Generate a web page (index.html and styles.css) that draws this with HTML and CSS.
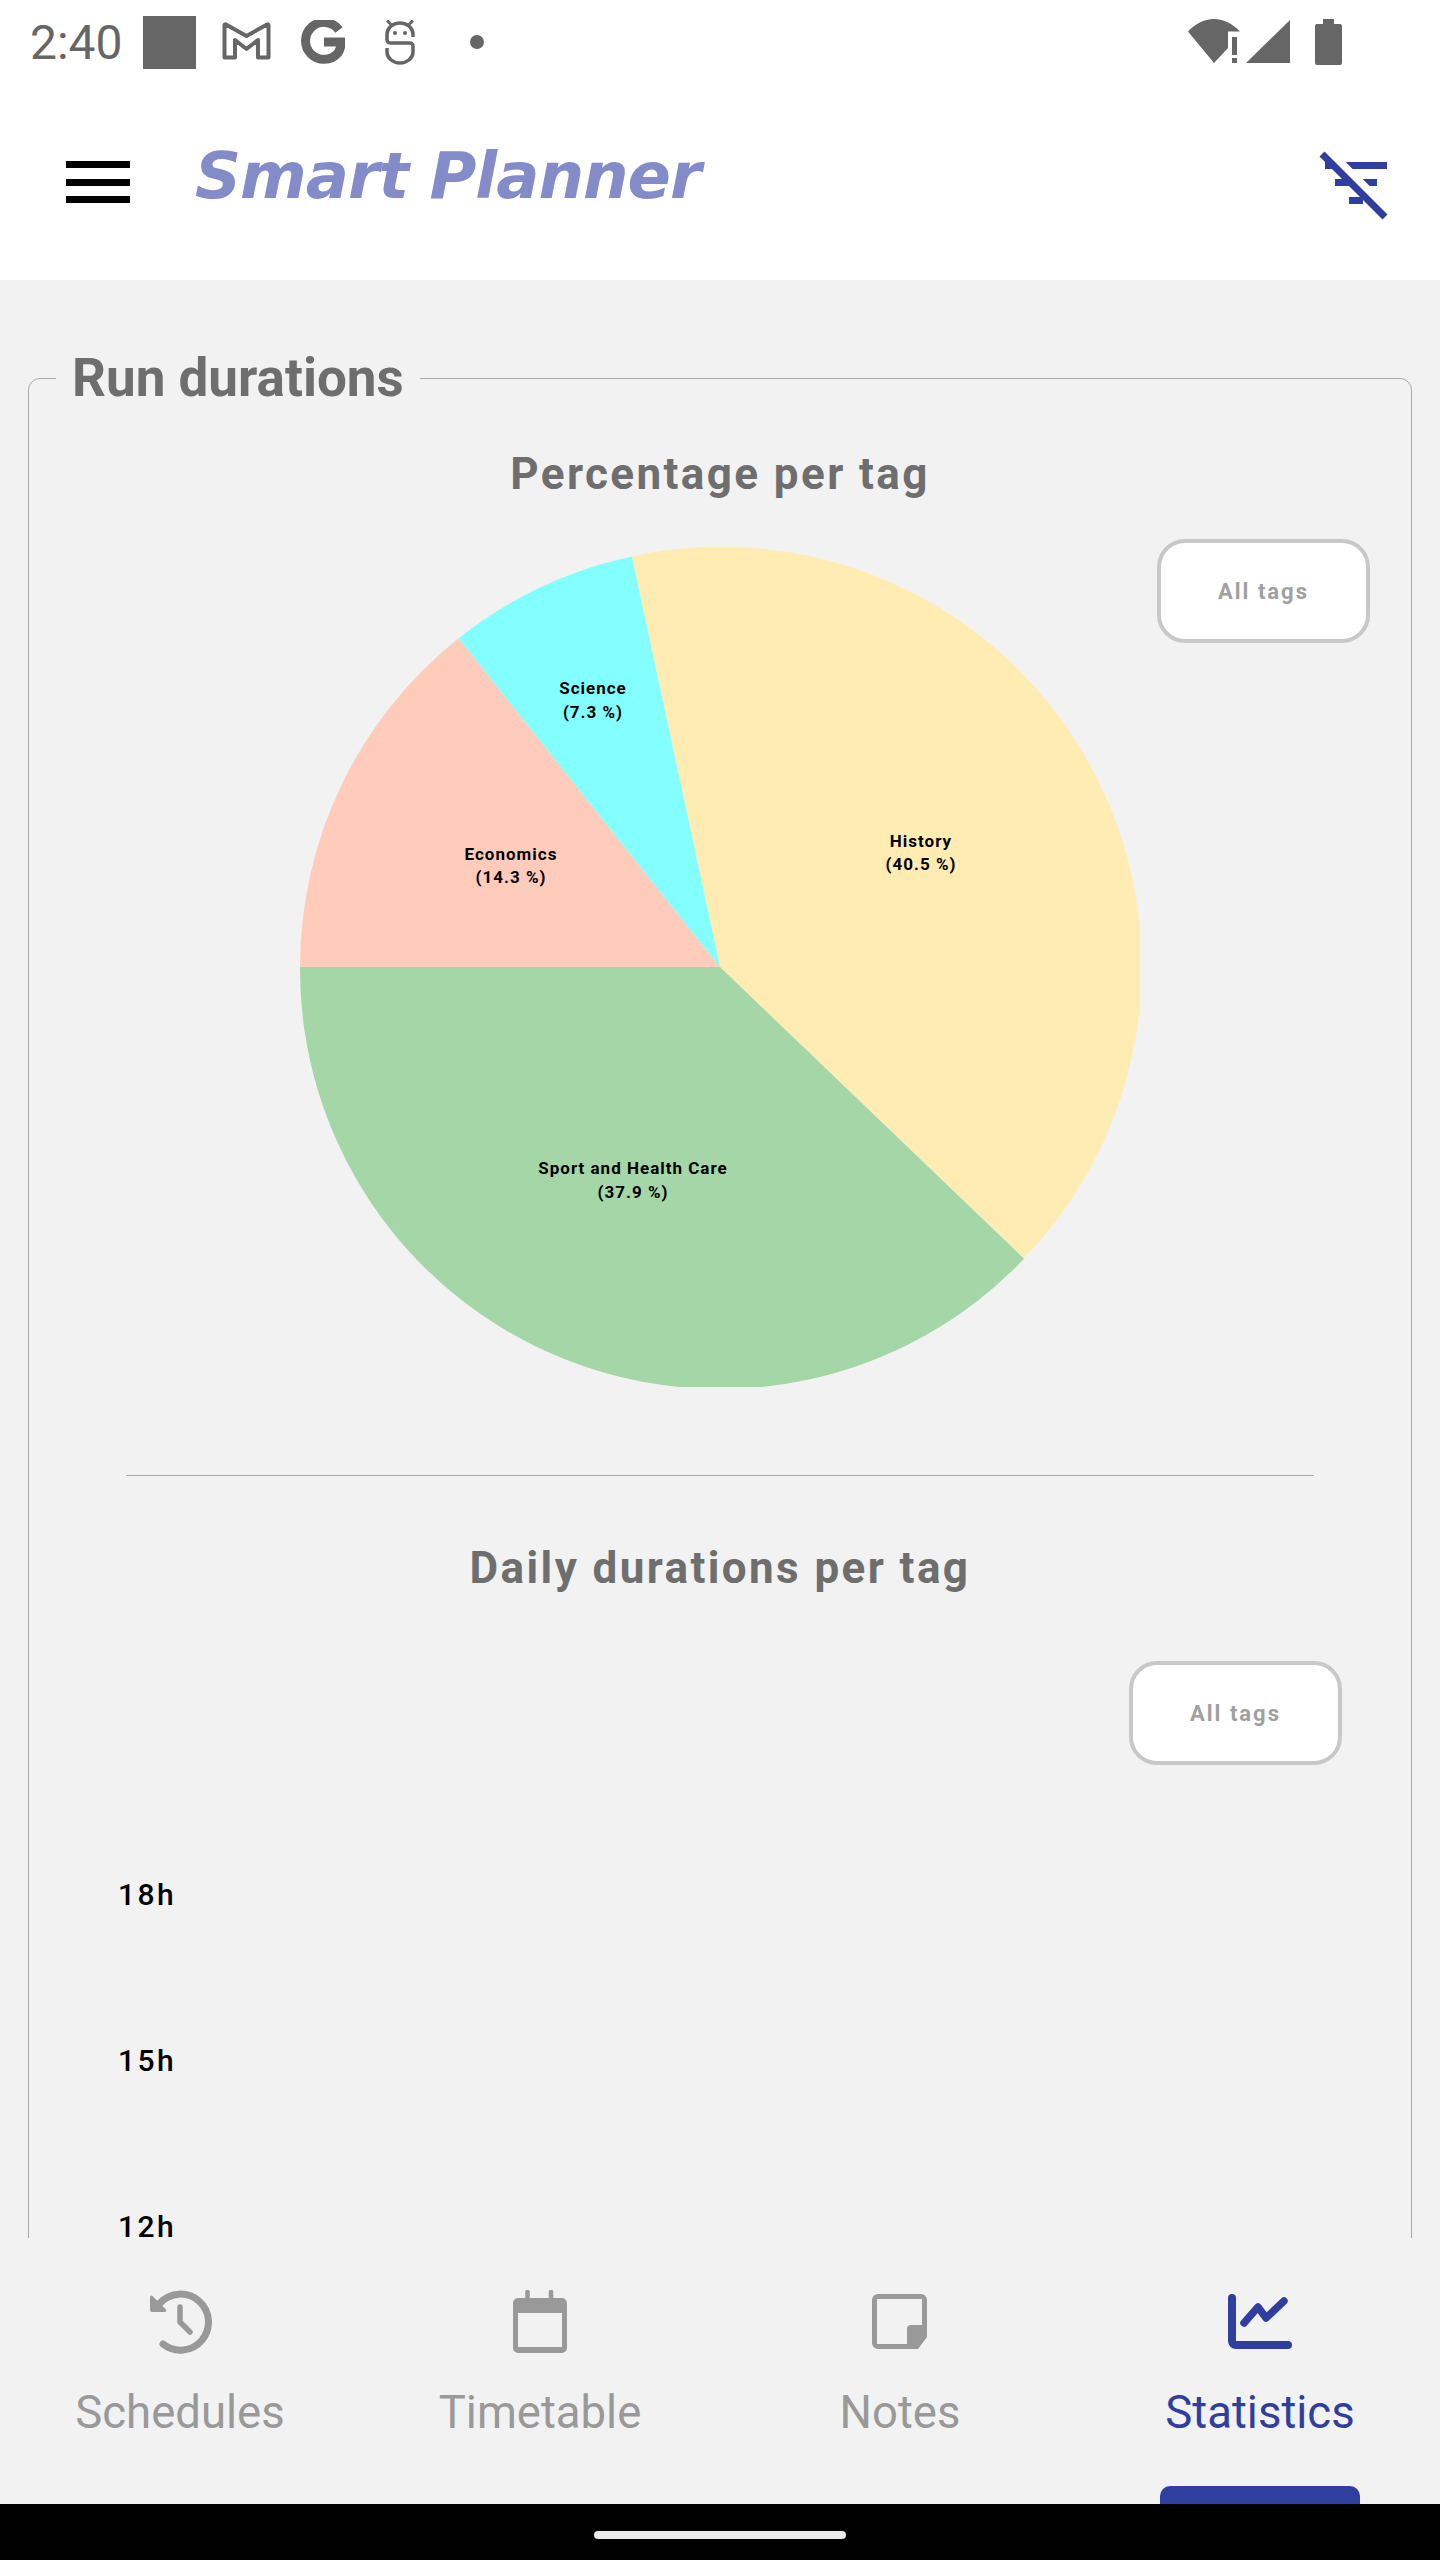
FILE: index.html
```html
<!DOCTYPE html>
<html lang="en">
<head>
  <meta charset="UTF-8">
  <meta name="viewport" content="width=device-width, initial-scale=1.0">
  <title>Smart Planner</title>
  <link rel="stylesheet" href="styles.css">
</head>
<body>
  <div class="status-bar">
    <div class="status-left">
      <span class="time">2:40</span>
      <span class="status-square"></span>
      <svg class="ico-m" viewBox="0 0 49 38"><path d="M2.500 3.500a1 1 0 0 1 1.500-1L24.500 14 45 2.500a1 1 0 0 1 1.500 1V35.500H36V18L24.500 27 13 18V35.500H2.500z" fill="none" stroke="#666" stroke-width="4" stroke-linejoin="round"/></svg>
      <svg class="ico-g" viewBox="0 0 44 45"><path d="M38 10A18.500 18.500 0 1 0 37 33 19 19 0 0 0 40 22H23" fill="none" stroke="#666" stroke-width="9"/></svg>
      <svg class="ico-bug" viewBox="0 0 32 45"><path d="M29 17V14A13 11 0 0 0 3 14V20a3 3 0 0 0 3 3H26a3 3 0 0 1 3 3V32A13 11 0 0 1 3 32V28" fill="none" stroke="#666" stroke-width="3.500"/><circle cx="11" cy="13" r="2" fill="#666"/><circle cx="21" cy="13" r="2" fill="#666"/><path d="M3 0.500l4 4M29 0.500l-4 4" stroke="#666" stroke-width="3"/></svg>
      <span class="status-dot"></span>
    </div>
    <div class="status-right">
      <svg class="ico-wifi" viewBox="0 0 52 44"><path d="M0 12.500C7 5 16 0 26 0s19 5 26 12.500h-12V29L26 44z" fill="#666"/><path d="M44 18h5v18h-5zM44 39h5v5h-5z" fill="#666"/></svg>
      <svg class="ico-signal" viewBox="0 0 44 43"><path d="M44 0v43H0z" fill="#666"/></svg>
      <svg class="ico-battery" viewBox="0 0 27 46"><path d="M8 0h11v5h6a2 2 0 0 1 2 2v37a2 2 0 0 1-2 2H2a2 2 0 0 1-2-2V7a2 2 0 0 1 2-2h6z" fill="#666"/></svg>
    </div>
  </div>

  <header class="app-bar">
    <div class="menu-icon"><span></span><span></span><span></span></div>
    <h1 class="app-title">Smart Planner</h1>
    <svg class="filter-off" viewBox="0 0 69 69"><path d="M6 11h62v7H6zM16 28h42v7H16zM30 46h14v7H30z" fill="#303f9f"/><path d="M8 -2l63 63" stroke="#fff" stroke-width="8"/><path d="M3 3l63 63" stroke="#303f9f" stroke-width="7"/></svg>
  </header>

  <main class="content">
    <fieldset class="panel">
      <legend>Run durations</legend>

      <h2 class="chart-title">Percentage per tag</h2>
      <div class="pie-chart">
        <button class="tag-button pie-button">All tags</button>
        <svg class="pie" viewBox="0 0 840 840">
          <path d="M420 420L331.800 9.400A420 420 0 0 1 724.100 711.100z" fill="#ffecb3"/>
          <path d="M420 420L724.100 711.700A420 420 0 0 1 0 420z" fill="#a5d6a7"/>
          <path d="M420 420H0A420 420 0 0 1 158.600 91.300z" fill="#ffccbc"/>
          <path d="M420 420L158.600 91.300A420 420 0 0 1 331.800 9.400z" fill="#84ffff"/>
          <g class="pie-label">
            <text x="621" y="300">History</text><text x="621" y="323">(40.5 %)</text>
            <text x="333" y="627">Sport and Health Care</text><text x="333" y="651">(37.9 %)</text>
            <text x="211" y="313">Economics</text><text x="211" y="336">(14.3 %)</text>
            <text x="293" y="147">Science</text><text x="293" y="171">(7.3 %)</text>
          </g>
        </svg>
      </div>

      <hr class="divider">

      <h2 class="chart-title chart-title-daily">Daily durations per tag</h2>
      <div class="button-row">
        <button class="tag-button">All tags</button>
      </div>
      <div class="y-axis">
        <span>18h</span>
        <span>15h</span>
        <span>12h</span>
      </div>
    </fieldset>
  </main>

  <nav class="bottom-nav">
    <div class="nav-item">
      <svg class="nav-icon" viewBox="0 0 64 64"><path d="M12 13A28 28 0 1 1 15 54" fill="none" stroke="#999" stroke-width="7" stroke-linecap="round"/><path d="M2 7a1.500 1.500 0 0 1 2.500-1L18 19.500a1.500 1.500 0 0 1-1 2.500H4a2 2 0 0 1-2-2z" fill="#999"/><path d="M32 17V32L42 42" fill="none" stroke="#999" stroke-width="5.500" stroke-linecap="round" stroke-linejoin="round"/></svg>
      <span>Schedules</span>
    </div>
    <div class="nav-item">
      <svg class="nav-icon" viewBox="0 0 64 64"><path d="M10 8h44a5 5 0 0 1 5 5v45a5 5 0 0 1-5 5H10a5 5 0 0 1-5-5V13a5 5 0 0 1 5-5zm0 15v34h44V23z" fill="#999" fill-rule="evenodd"/><path d="M19.500 2v8M43 2v8" stroke="#999" stroke-width="4.500" stroke-linecap="round"/></svg>
      <span>Timetable</span>
    </div>
    <div class="nav-item">
      <svg class="nav-icon" viewBox="0 0 64 64"><path d="M10 4h43a6 6 0 0 1 6 6v37L50 59H10a6 6 0 0 1-6-6V10a6 6 0 0 1 6-6zM9 9v45h30V39a4 4 0 0 1 4-4h11V9z" fill="#999" fill-rule="evenodd"/></svg>
      <span>Notes</span>
    </div>
    <div class="nav-item active">
      <svg class="nav-icon" viewBox="0 0 64 64"><path d="M4 8V51a4 4 0 0 0 4 4H60" fill="none" stroke="#303f9f" stroke-width="8" stroke-linecap="round" stroke-linejoin="round"/><path d="M16 33L30 17L38 28L56 11" fill="none" stroke="#303f9f" stroke-width="7.500" stroke-linecap="round" stroke-linejoin="round"/></svg>
      <span>Statistics</span>
      <div class="nav-indicator"></div>
    </div>
  </nav>

  <div class="system-bar"><div class="home-pill"></div></div>
</body>
</html>
```

FILE: styles.css
```css
* {
  box-sizing: border-box;
}

body {
  margin: 0;
  height: 2560px;
  display: flex;
  flex-direction: column;
  background: #f2f2f2;
  font-family: Roboto, sans-serif;
  overflow: hidden;
}

/* status bar */
.status-bar {
  height: 90px;
  flex: none;
  background: #fff;
  display: flex;
  justify-content: space-between;
  padding: 16px 98px 0 30px;
}

.status-left {
  display: flex;
  align-items: flex-start;
}

.time {
  font-size: 48px;
  line-height: 54px;
  width: 113px;
  color: #666;
}

.status-square {
  width: 53px;
  height: 53px;
  background: #666;
  margin-right: 26px;
}

.ico-m {
  width: 49px;
  height: 38px;
  margin: 6px 30px 0 0;
}

.ico-g {
  width: 44px;
  height: 45px;
  margin: 4px 39px 0 0;
}

.ico-bug {
  width: 32px;
  height: 45px;
  margin: 4px 54px 0 0;
}

.status-dot {
  width: 14px;
  height: 14px;
  margin-top: 19px;
  border-radius: 50%;
  background: #666;
}

.status-right {
  display: flex;
  align-items: flex-start;
}

.ico-wifi {
  width: 52px;
  height: 44px;
  margin: 3px 6px 0 0;
}

.ico-signal {
  width: 44px;
  height: 43px;
  margin: 4px 25px 0 0;
}

.ico-battery {
  width: 27px;
  height: 46px;
  margin-top: 3px;
}

/* app bar */
.app-bar {
  height: 190px;
  flex: none;
  background: #fff;
  display: flex;
  align-items: center;
  padding: 0 52px 0 66px;
}

.menu-icon {
  width: 64px;
  margin-top: -6px;
  display: flex;
  flex-direction: column;
  gap: 10.5px;
}

.menu-icon span {
  height: 7px;
  background: #000;
}

.app-title {
  margin: -18px 0 0 65px;
  flex: 1;
  font-family: "DejaVu Sans", sans-serif;
  font-size: 64px;
  font-style: italic;
  font-weight: bold;
  letter-spacing: -1px;
  color: #838bc9;
}

.filter-off {
  width: 69px;
  height: 69px;
}

/* main panel */
.content {
  flex: 1;
  min-height: 0;
  overflow: hidden;
  padding: 68px 28px 0;
}

.panel {
  margin: 0;
  padding: 0 40px;
  height: 2400px;
  border: 1px solid #a8a8a8;
  border-radius: 12px;
  min-width: 0;
}

.panel legend {
  margin-left: -13px;
  padding: 0 16px;
  font-size: 53px;
  font-weight: 700;
  line-height: 60px;
  color: #6e6e6e;
}

.chart-title {
  margin: 36px 0 0;
  text-align: center;
  font-size: 44px;
  font-weight: 700;
  line-height: 60px;
  letter-spacing: 2.4px;
  color: #6e6e6e;
}

.chart-title-daily {
  margin-top: 62px;
}

.pie-chart {
  position: relative;
  display: flex;
  justify-content: center;
  margin-top: 43px;
}

.pie {
  width: 840px;
  height: 840px;
}

.pie-label text {
  font-family: Roboto, sans-serif;
  font-size: 17px;
  font-weight: 700;
  letter-spacing: 1px;
  text-anchor: middle;
  fill: #000;
}

.tag-button {
  width: 213px;
  height: 104px;
  background: #fff;
  border: 4px solid #c8c8c8;
  border-radius: 28px;
  font-family: Roboto, sans-serif;
  font-size: 22px;
  font-weight: 700;
  letter-spacing: 2px;
  color: #a0a0a0;
}

.pie-button {
  position: absolute;
  top: -8px;
  right: 1px;
}

.divider {
  margin: 88px 57px 0;
  border: 0;
  border-top: 1px solid #a8a8a8;
}

.button-row {
  display: flex;
  justify-content: flex-end;
  padding-right: 29px;
  margin-top: 63px;
}

.y-axis {
  display: flex;
  flex-direction: column;
  gap: 132px;
  margin: 113px 0 0 49px;
  font-size: 30px;
  font-weight: 500;
  line-height: 34px;
  letter-spacing: 2.4px;
  color: #000;
}

/* bottom nav */
.bottom-nav {
  height: 266px;
  flex: none;
  display: flex;
  background: #f2f2f2;
}

.nav-item {
  flex: 1;
  position: relative;
  display: flex;
  flex-direction: column;
  align-items: center;
  padding-top: 52px;
  font-size: 45.5px;
  color: #999;
}

.nav-icon {
  width: 64px;
  height: 64px;
}

.nav-item span {
  margin-top: 31px;
  line-height: 56px;
}

.nav-item.active {
  color: #303f9f;
}

.nav-indicator {
  position: absolute;
  left: 80px;
  bottom: 0;
  width: 200px;
  height: 18px;
  background: #303f9f;
  border-radius: 10px 10px 0 0;
}

.system-bar {
  height: 56px;
  flex: none;
  background: #000;
  display: flex;
  justify-content: center;
  padding-top: 27px;
}

.home-pill {
  width: 252px;
  height: 8px;
  border-radius: 4px;
  background: #ebebeb;
}
```
